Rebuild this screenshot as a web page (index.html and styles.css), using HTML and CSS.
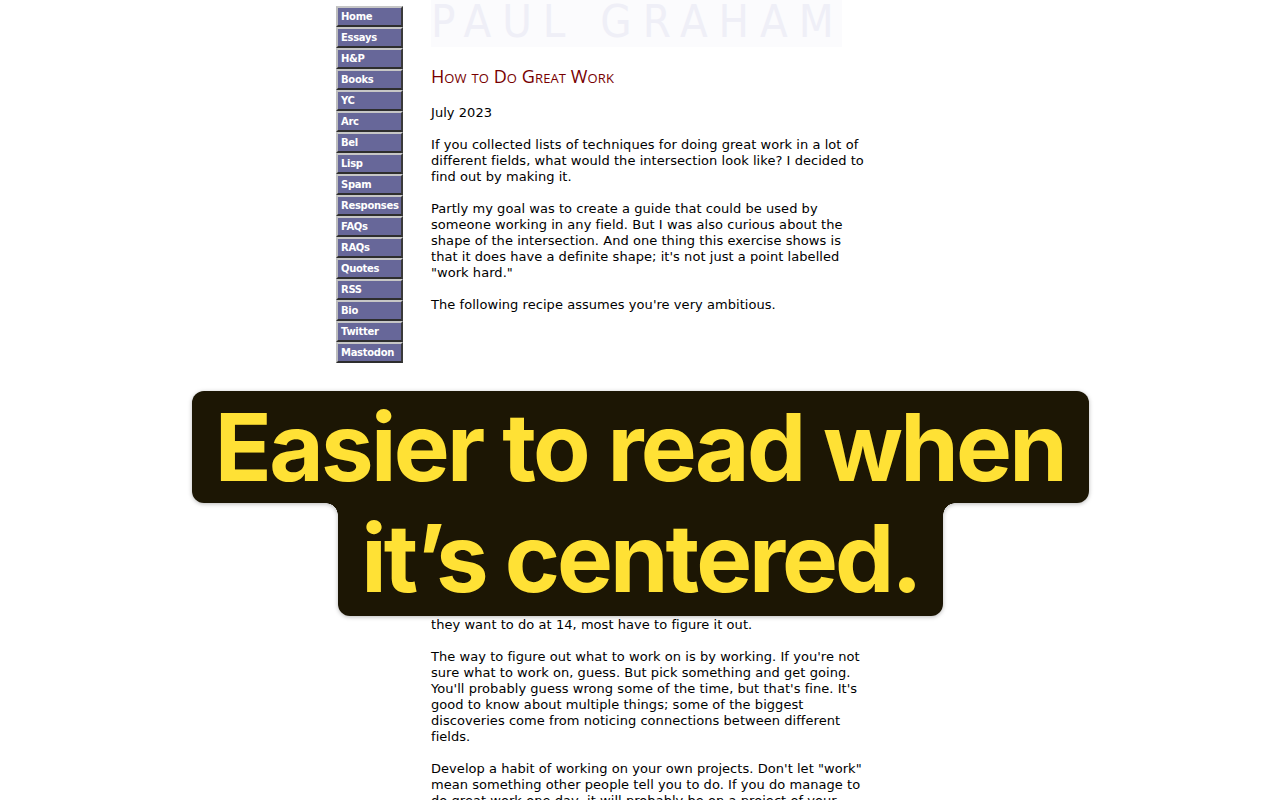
FILE: index.html
```html
<!DOCTYPE html>
<html>
<head>
<meta charset="utf-8">
<title>How to Do Great Work</title>
<link rel="stylesheet" href="styles.css">
</head>
<body>
<div class="page">
  <nav class="nav">
    <a class="btn">Home</a>
    <a class="btn">Essays</a>
    <a class="btn">H&amp;P</a>
    <a class="btn">Books</a>
    <a class="btn">YC</a>
    <a class="btn">Arc</a>
    <a class="btn">Bel</a>
    <a class="btn">Lisp</a>
    <a class="btn">Spam</a>
    <a class="btn">Responses</a>
    <a class="btn">FAQs</a>
    <a class="btn">RAQs</a>
    <a class="btn">Quotes</a>
    <a class="btn">RSS</a>
    <a class="btn">Bio</a>
    <a class="btn">Twitter</a>
    <a class="btn">Mastodon</a>
  </nav>
  <main class="content">
    <div class="logo">PAUL GRAHAM</div>
    <h1 class="title">How to Do Great Work</h1>
    <p>July 2023</p>
    <p>If you collected lists of techniques for doing great work in a lot of different fields, what would the intersection look like? I decided to find out by making it.</p>
    <p>Partly my goal was to create a guide that could be used by someone working in any field. But I was also curious about the shape of the intersection. And one thing this exercise shows is that it does have a definite shape; it's not just a point labelled "work hard."</p>
    <p>The following recipe assumes you're very ambitious.</p>
    <div class="hidden-block">
      <p>In practice you don't have to worry much about the third criterion. Ambitious people are if anything already too conservative about what they try to do. So all you need to do is find something you have an aptitude for and great interest in. [1]</p>
      <p class="last">That sounds straightforward, but it's often quite difficult. When you're young you don't know what you're good at or what different kinds of work are like. Some kinds of work you end up doing may not even exist yet. So while some people know what<br>they want to do at 14, most have to figure it out.</p>
    </div>
    <p class="after">The way to figure out what to work on is by working. If you're not sure what to work on, guess. But pick something and get going. You'll probably guess wrong some of the time, but that's fine. It's good to know about multiple things; some of the biggest discoveries come from noticing connections between different fields.</p>
    <p>Develop a habit of working on your own projects. Don't let "work" mean something other people tell you to do. If you do manage to do great work one day, it will probably be on a project of your own. It may be within some bigger project, but you'll be driving your part of it.</p>
  </main>
</div>
<div class="caption">
  <div class="cap-line cap-top">Easier to read when</div>
  <div class="cap-line cap-bottom">it’s centered.</div>
</div>
</body>
</html>
```
FILE: styles.css
```css
html, body {
  margin: 0;
  padding: 0;
  background: #ffffff;
  overflow: hidden;
}

.page {
  display: flex;
  align-items: flex-start;
  padding-left: 336px;
  gap: 28px;
  height: 800px;
  overflow: hidden;
}

.nav {
  display: flex;
  flex-direction: column;
  padding-top: 6px;
  width: 67px;
  flex: none;
}

.btn {
  display: block;
  box-sizing: border-box;
  width: 67px;
  height: 21px;
  background: #676799;
  border-top: 2px solid #c6c6c6;
  border-left: 2px solid #bdbdbd;
  border-right: 2px solid #3a3a3a;
  border-bottom: 2px solid #2e2e2e;
  color: #ffffff;
  font-family: "DejaVu Sans", Verdana, sans-serif;
  font-weight: bold;
  font-size: 10px;
  line-height: 17px;
  padding-left: 3px;
  letter-spacing: -0.3px;
  white-space: nowrap;
  overflow: hidden;
}

.content {
  width: 435px;
  flex: none;
  font-family: "DejaVu Sans", Verdana, sans-serif;
  font-size: 13px;
  line-height: 16px;
  letter-spacing: 0.05px;
  color: #000000;
}

.logo {
  width: 411px;
  height: 47px;
  background: #fbfbfd;
  color: #efeff7;
  font-family: "Liberation Sans Narrow", "DejaVu Sans Condensed", "Liberation Sans", sans-serif;
  font-stretch: condensed;
  font-size: 45px;
  line-height: 44px;
  letter-spacing: 11px;
  word-spacing: 0;
  white-space: nowrap;
  overflow: hidden;
}

.title {
  margin: 19px 0 19px 0;
  font-family: "Open Sans", "DejaVu Sans", sans-serif;
  font-variant: small-caps;
  font-weight: normal;
  font-size: 18px;
  line-height: 20px;
  color: #770000;
  letter-spacing: 0.1px;
}

.content p {
  margin: 0 0 16px 0;
}

.hidden-block {
  height: 240px;
  margin-top: 80px;
  display: flex;
  flex-direction: column;
  justify-content: flex-end;
  overflow: hidden;
}

.hidden-block p.last {
  margin-bottom: 0;
}

.content p.after {
  margin-top: 16px;
}

.caption {
  position: absolute;
  top: 391px;
  left: 1px;
  right: 0;
  display: flex;
  flex-direction: column;
  align-items: center;
  filter: drop-shadow(0 1px 2px rgba(0, 0, 0, 0.28));
}

.cap-line {
  background: #1c1604;
  color: #ffe135;
  font-family: Inter, "Liberation Sans", sans-serif;
  font-weight: 700;
  font-size: 94px;
  white-space: nowrap;
  border-radius: 12px;
  text-align: center;
}

.cap-top {
  height: 112px;
  line-height: 112px;
  letter-spacing: -2.7px;
  padding: 0 24px 0 23px;
}

.cap-bottom {
  position: relative;
  height: 113px;
  line-height: 110px;
  letter-spacing: -3px;
  padding: 0 23px 0 23px;
  border-radius: 0 0 12px 12px;
}

.cap-bottom::before,
.cap-bottom::after {
  content: "";
  position: absolute;
  top: 0;
  width: 12px;
  height: 12px;
}

.cap-bottom::before {
  left: -12px;
  background: radial-gradient(circle at 0 100%, transparent 11.5px, #1c1604 12px);
}

.cap-bottom::after {
  right: -12px;
  background: radial-gradient(circle at 100% 100%, transparent 11.5px, #1c1604 12px);
}
```
